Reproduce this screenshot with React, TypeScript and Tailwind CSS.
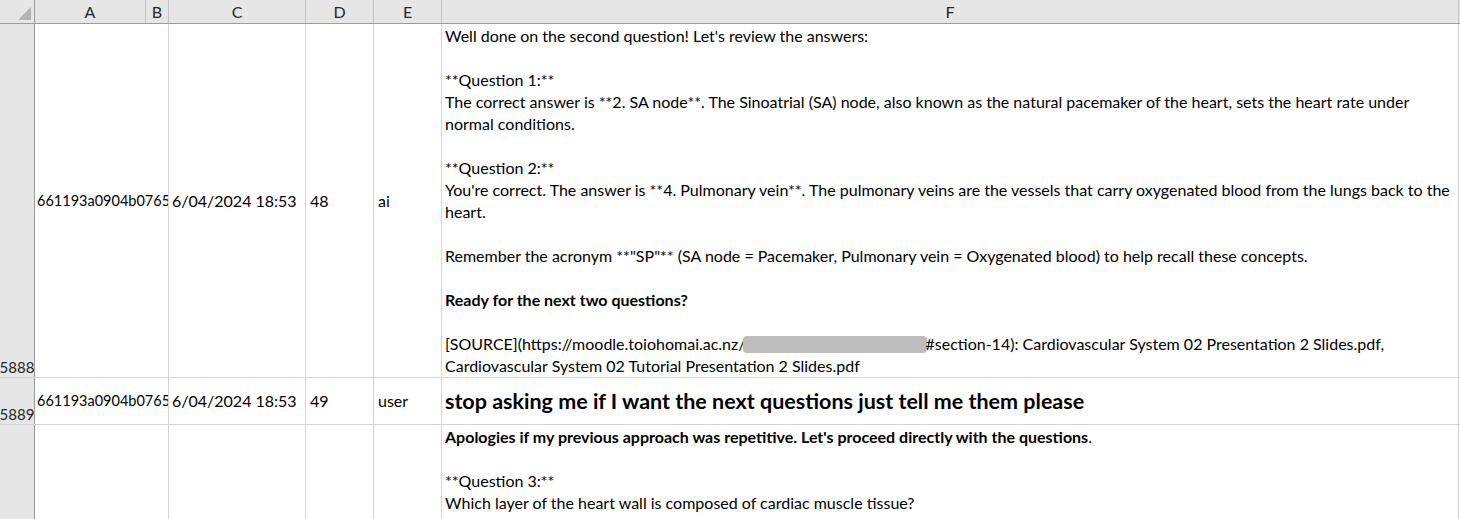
const font = "font-['Lato','Liberation_Sans',sans-serif]"

const cols = [
    { key: "A", w: "w-[111px]" },
    { key: "B", w: "w-[23px]" },
    { key: "C", w: "w-[137px]" },
    { key: "D", w: "w-[68px]" },
    { key: "E", w: "w-[68px]" },
    { key: "F", w: "w-[1017px]" },
]

const Line = ({ children, bold }: { children?: React.ReactNode; bold?: boolean }) => (
    <div className={`h-[22px] leading-[22px] whitespace-nowrap ${bold ? "font-bold" : ""}`}>{children ?? "\u00a0"}</div>
)

const Redacted = () => (
    <span className="inline-block align-middle w-[184px] h-[17px] rounded-[4px] bg-[#bdbdbd] -mt-[2px] -ml-[3px] mr-[-1px]" />
)

const HeaderRow = () => (
    <div className="flex h-[24px] bg-[#e6e6e6] border-b border-[#9b9b9b]">
        <div className="w-[35px] shrink-0 border-r border-[#9b9b9b] relative">
            <svg width="34" height="23" className="absolute left-0 top-0">
                <polygon points="31,7 31,20 18,20" fill="#b4b4b4" />
            </svg>
        </div>
        {cols.map(c => (
            <div
                key={c.key}
                className={`${c.w} shrink-0 border-r border-[#c4c4c4] flex items-center justify-center text-[16px] text-[#262626]`}
            >
                {c.key}
            </div>
        ))}
    </div>
)

type RowProps = {
    num?: string
    h: string
    id?: string
    date?: string
    idx?: string
    role?: string
    center?: boolean
    children: React.ReactNode
}

const Row = ({ num, h, id, date, idx, role, center, children }: RowProps) => (
    <div className={`flex ${h} shrink-0 border-b border-[#d4d4d4] text-[16px] text-black`}>
        <div className="w-[35px] shrink-0 bg-[#e6e6e6] border-r border-[#9b9b9b] flex items-end justify-center leading-[20px] text-[15px] text-[#262626]">
            {num}
        </div>
        {/* A spills into the empty B column, so no gridline between them */}
        <div className="w-[134px] shrink-0 border-r border-[#d4d4d4] overflow-hidden flex items-center pl-[2px]">
            <span className="whitespace-nowrap text-[14.5px]">{id}</span>
        </div>
        <div className="w-[137px] shrink-0 border-r border-[#d4d4d4] flex items-center pl-[3px] whitespace-nowrap">{date}</div>
        <div className="w-[68px] shrink-0 border-r border-[#d4d4d4] flex items-center pl-[4px]">{idx}</div>
        <div className="w-[68px] shrink-0 border-r border-[#d4d4d4] flex items-center pl-[4px]">{role}</div>
        <div className={`w-[1017px] shrink-0 border-r border-[#d4d4d4] pl-[3px] overflow-hidden ${center ? "flex items-center" : "pt-[1px]"}`}>
            <div>{children}</div>
        </div>
    </div>
)

export default function App() {
    return (
        <div className={`w-[1460px] h-[519px] overflow-hidden bg-white flex flex-col ${font}`}>
            <HeaderRow />

            <Row num="5888" h="h-[354px]" id="661193a0904b0765f" date="6/04/2024 18:53" idx="48" role="ai">
                <Line>Well done on the second question! Let's review the answers:</Line>
                <Line />
                <Line>**Question 1:**</Line>
                <Line>
                    The correct answer is **2. SA node**. The Sinoatrial (SA) node, also known as the natural pacemaker of the heart, sets the heart rate under
                </Line>
                <Line>normal conditions.</Line>
                <Line />
                <Line>**Question 2:**</Line>
                <Line>
                    You're correct. The answer is **4. Pulmonary vein**. The pulmonary veins are the vessels that carry oxygenated blood from the lungs back to the
                </Line>
                <Line>heart.</Line>
                <Line />
                <Line>
                    Remember the acronym **"SP"** (SA node = Pacemaker, Pulmonary vein = Oxygenated blood) to help recall these concepts.
                </Line>
                <Line />
                <Line bold>Ready for the next two questions?</Line>
                <Line />
                <Line>
                    [SOURCE](https://moodle.toiohomai.ac.nz/<Redacted />#section-14): Cardiovascular System 02 Presentation 2 Slides.pdf,
                </Line>
                <Line>Cardiovascular System 02 Tutorial Presentation 2 Slides.pdf</Line>
            </Row>

            <Row num="5889" h="h-[47px]" id="661193a0904b0765f" date="6/04/2024 18:53" idx="49" role="user" center>
                <div className="text-[21.5px] font-bold whitespace-nowrap leading-[28px]">
                    stop asking me if I want the next questions just tell me them please
                </div>
            </Row>

            <Row h="h-[200px]">
                <Line>
                    <span className="font-bold">Apologies if my previous approach was repetitive. Let's proceed directly with the questions</span>.
                </Line>
                <Line />
                <Line>**Question 3:**</Line>
                <Line>Which layer of the heart wall is composed of cardiac muscle tissue?</Line>
            </Row>
        </div>
    )
}
